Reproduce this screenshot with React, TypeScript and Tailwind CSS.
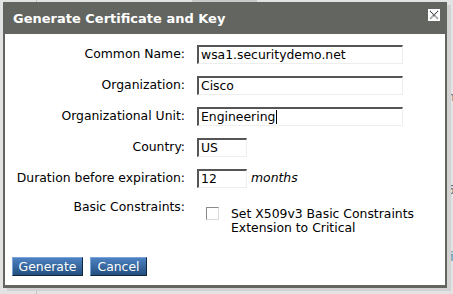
import React from 'react';

const font = { fontFamily: '"DejaVu Sans", Verdana, sans-serif' };

const rows = [
  { label: 'Common Name:', value: 'wsa1.securitydemo.net', wide: true },
  { label: 'Organization:', value: 'Cisco', wide: true },
  { label: 'Organizational Unit:', value: 'Engineering', wide: true, caret: true },
  { label: 'Country:', value: 'US', wide: false },
];

const TextBox: React.FC<{ value: string; wide: boolean; caret?: boolean }> = ({ value, wide, caret }) => (
  <div
    className={`flex h-[19px] items-center border-t-2 border-l-2 border-b border-r border-t-[#555] border-l-[#555] border-b-[#eee] border-r-[#eee] bg-white pl-[2px] text-[12.4px] text-black ${
      wide ? 'w-[206px]' : 'w-[50px]'
    }`}
  >
    <span>{value}</span>
    {caret && <span className="ml-[1px] h-[14px] w-px bg-black" />}
  </div>
);

export default function App() {
  return (
    <div className="relative h-[294px] w-[453px] overflow-hidden bg-[#e3e3e3]" style={font}>
      {/* page behind the dialog */}
      <div className="absolute left-[36px] top-0 h-full w-px bg-[#c4c4c4]" />
      <div className="absolute left-[192px] top-0 h-[2px] w-[65px] bg-[#c9c9c9]" />
      <div className="absolute left-[447px] top-[88px] text-[12px] text-[#666]">n</div>
      <div className="absolute left-[447px] top-[181px] text-[12px] text-[#666]">6</div>
      <div className="absolute left-[446px] top-[248px] text-[12px] text-[#4a8aa0]">fi</div>

      {/* dialog */}
      <div className="absolute left-[3px] top-[2px] flex w-[444px] flex-col shadow-[4px_3px_0_#d2d2d2]">
        <div className="flex h-[32px] items-start justify-between bg-[#636561] pl-[10px] pr-[7px]">
          <span className="mt-[9px] text-[13px] font-bold leading-[16px] text-white">
            Generate Certificate and Key
          </span>
          <div className="mt-[7px] flex h-[12px] w-[12px] items-center justify-center bg-white">
            <svg width="10" height="10" viewBox="0 0 10 10">
              <path d="M1 1L9 9M9 1L1 9" stroke="#333" strokeWidth="1.2" strokeDasharray="1 0.6" />
            </svg>
          </div>
        </div>

        <div className="flex flex-col border-x-2 border-b-[3px] border-[#636561] bg-white pb-[9px] pt-[11px] text-[12.4px] text-black">
          <div className="flex flex-col gap-[12px]">
            {rows.map((r) => (
              <div key={r.label} className="flex items-center">
                <div className="w-[180px] text-right">{r.label}</div>
                <div className="ml-[12px]">
                  <TextBox value={r.value} wide={r.wide} caret={r.caret} />
                </div>
              </div>
            ))}
            <div className="flex items-center">
              <div className="w-[180px] text-right">Duration before expiration:</div>
              <div className="ml-[12px] flex items-center">
                <TextBox value="12" wide={false} />
                <span className="ml-[4px] italic">months</span>
              </div>
            </div>
          </div>

          <div className="mt-[11px] flex items-start">
            <div className="w-[180px] text-right leading-[15px]">Basic Constraints:</div>
            <div className="ml-[21px] mt-[8px] flex items-start">
              <div className="h-[13px] w-[13px] border-t border-l border-b border-r border-t-[#8a8a8a] border-l-[#8a8a8a] border-b-[#dcdcdc] border-r-[#dcdcdc] bg-white" />
              <div className="ml-[12px] leading-[14px]">
                Set X509v3 Basic Constraints
                <br />
                Extension to Critical
              </div>
            </div>
          </div>

          <div className="ml-[7px] mt-[22px] flex gap-[7px]">
            <button className="h-[19px] w-[71px] border border-t-[#7aa3d6] border-l-[#7aa3d6] border-b-[#12263f] border-r-[#12263f] bg-gradient-to-b from-[#4c81c2] to-[#24507f] text-[12.4px] leading-[16px] text-white">
              Generate
            </button>
            <button className="h-[19px] w-[57px] border border-t-[#7aa3d6] border-l-[#7aa3d6] border-b-[#12263f] border-r-[#12263f] bg-gradient-to-b from-[#4c81c2] to-[#24507f] text-[12.4px] leading-[16px] text-white">
              Cancel
            </button>
          </div>
        </div>
      </div>
    </div>
  );
}
